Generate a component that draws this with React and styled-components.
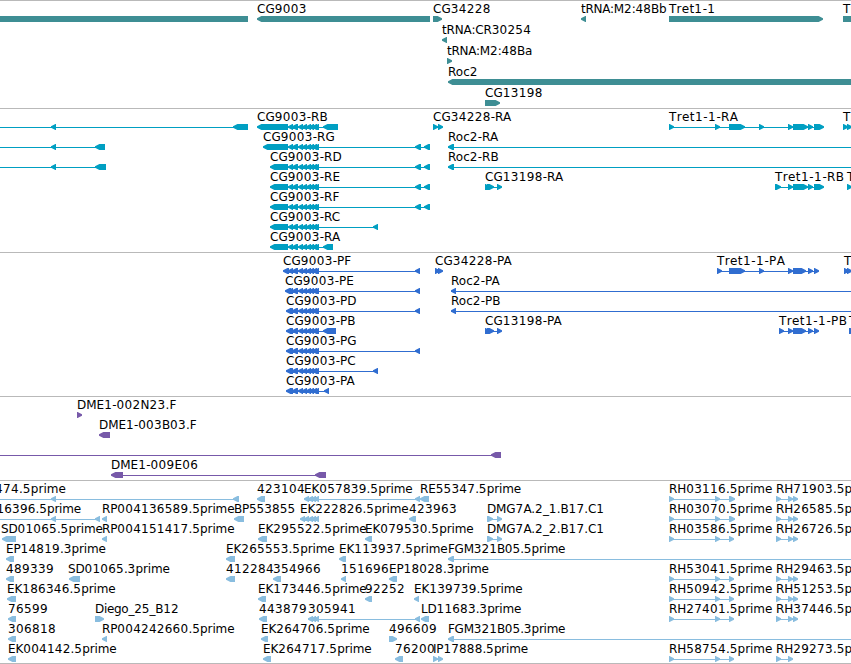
import React from "react";
import styled, { createGlobalStyle } from "styled-components";

const PageStyle = createGlobalStyle`
  body { margin: 0; background: #fff; overflow: hidden; }
`;

const Browser = styled.main`
  display: flex;
  flex-direction: column;
  width: 851px;
  height: 664px;
  overflow: hidden;
  background: #fff;
`;

const Track = styled.section`
  box-sizing: border-box;
  flex: none;
  height: ${(p) => p.$height}px;
  border-top: 1px solid #b9b9b9;
  color: ${(p) => p.$color};
  overflow: hidden;
`;

const Row = styled.div`
  position: relative;
  height: ${(p) => p.$height}px;
`;

const Label = styled.span`
  position: absolute;
  top: 1px;
  left: ${(p) => p.$x}px;
  font: 12px/14px "DejaVu Sans", sans-serif;
  font-kerning: ${(p) => (p.$spacing > 0 ? "none" : "auto")};
  letter-spacing: ${(p) => p.$spacing}px;
  color: #000;
  white-space: pre;
`;

const Digits = styled.span`
  letter-spacing: ${(p) => p.$spacing + 0.37}px;
`;

const Glyphs = styled.svg`
  display: block;
  width: 851px;
  height: 22px;
  fill: currentColor;
`;

const EndRule = styled.div`
  height: 1px;
  background: #b9b9b9;
`;

// A feature is [label, labelX, direction, segments, lineEnds?]
const L = "left";
const R = "right";
const N = "none";

// Tracking by label prefix, in pixels
const tracking = [
  ["Tret1-1-", 0.38],
  ["Tret", 0.25],
  ["EK", -0.11],
  ["EP", -0.13],
  ["RP", -0.11],
  ["RE", -0.12],
  ["RH", -0.07],
  ["BP", -0.3],
  ["DMG", -0.12],
  ["DME1-003", -0.08],
  ["tRNA:M2", -0.25],
  ["tRNA", -0.15],
  ["FGM", -0.28],
  ["Diego", -0.3],
  ["LD", -0.18],
  ["SD", -0.14],
  ["IP", -0.19],
  ["16396", -0.2],
];

const small = (...starts) => starts.map((s) => [s, s + 5]);
const introns = [[288, 293], [292, 298], ...small(298, 302, 306, 309, 312, 314)];
const cdsStart = (x) => [[x, x + 6], [288, 293], [292, 298], ...small(298, 302, 306, 309, 312, 314)];
const pair = [[415, 421], [424, 430]];
const tretTail = [[788, 793], [793, 808], [808, 813], [814, 824]];
const tretCds = [[788, 793], [793, 806], [808, 813], [814, 819]];
const rh = (a, end, b) => [
  [a, 669, R, [[669, 674], [715, 720], [729, end]]],
  [b, 776, R, [[776, 781], [788, 793], [793, 798]]],
];

const tracks = [
  {
    height: 108, pitch: 21, color: "#3e8e94",
    rows: [
      [
        ["", 0, N, [[-10, 248]]],
        ["CG9003", 257, L, [[257, 430]]],
        ["CG34228", 433, R, [[433, 442]]],
        ["tRNA:M2:48Bb", 581, L, [[581, 586]]],
        ["Tret1-1", 669, R, [[669, 823]]],
        ["Tret1-2", 843, R, [[843, 900]]],
      ],
      [["tRNA:CR30254", 442, L, [[442, 447]]]],
      [["tRNA:M2:48Ba", 447, R, [[447, 452]]]],
      [["Roc2", 448, L, [[448, 900]]]],
      [["CG13198", 485, R, [[485, 500]]]],
    ],
  },
  {
    height: 144, pitch: 20, color: "#009fc2",
    rows: [
      [
        ["", 0, L, [[51, 56], [233, 248]], [-5, 248]],
        ["CG9003-RB", 257, L, [[257, 288], ...introns, [323, 338]]],
        ["CG34228-RA", 433, R, [[433, 438], [438, 443]]],
        ["Tret1-1-RA", 669, R, [[669, 674], [715, 720], [729, 745], [759, 764], ...tretTail]],
        ["Tret1-2-RA", 843, R, [[843, 848], [847, 852]]],
      ],
      [
        ["", 0, L, [[51, 56], [95, 105]], [-5, 105]],
        ["CG9003-RG", 263, L, [[263, 288], ...introns, ...pair]],
        ["Roc2-RA", 448, L, [[448, 454]], [448, 860]],
      ],
      [
        ["", 0, L, [[51, 56], [95, 106]], [-5, 106]],
        ["CG9003-RD", 270, L, [[270, 288], ...introns, ...pair]],
        ["Roc2-RB", 448, L, [[448, 454]], [448, 860]],
      ],
      [
        ["CG9003-RE", 270, L, [[270, 288], ...introns, ...pair]],
        ["CG13198-RA", 485, R, [[485, 490], [487, 494], [497, 502]]],
        ["Tret1-1-RB", 775, R, [[775, 781], ...tretTail]],
        ["Tret1-2-RB", 847, R, [[847, 852]]],
      ],
      [["CG9003-RF", 270, L, [[270, 288], ...introns, ...pair]]],
      [["CG9003-RC", 270, L, [[270, 288], ...introns, [373, 378]]]],
      [["CG9003-RA", 270, L, [[270, 288], ...introns, [323, 333]]]],
    ],
  },
  {
    height: 144, pitch: 20, color: "#306dd0",
    rows: [
      [
        ["CG9003-PF", 283, L, [...cdsStart(283), [415, 420]]],
        ["CG34228-PA", 435, R, [[435, 440], [438, 443]]],
        ["Tret1-1-PA", 717, R, [[717, 722], [729, 745], [759, 764], ...tretCds]],
        ["Tret1-2-PA", 844, R, [[844, 849], [847, 852]]],
      ],
      [
        ["CG9003-PE", 285, L, [...cdsStart(285), [415, 420]]],
        ["Roc2-PA", 451, L, [[451, 456]], [451, 860]],
      ],
      [
        ["CG9003-PD", 286, L, [...cdsStart(286), [415, 420]]],
        ["Roc2-PB", 451, L, [[451, 456]], [451, 860]],
      ],
      [
        ["CG9003-PB", 286, L, [...cdsStart(286), [323, 336]]],
        ["CG13198-PA", 485, R, [[485, 490], [487, 494], [497, 502]]],
        ["Tret1-1-PB", 779, R, [[779, 784], ...tretCds]],
        ["Tret1-2-PB", 849, R, [[849, 855]]],
      ],
      [["CG9003-PG", 286, L, [...cdsStart(286), [415, 420]]]],
      [["CG9003-PC", 286, L, [...cdsStart(286), [373, 378]]]],
      [["CG9003-PA", 286, L, [...cdsStart(286), [324, 329]]]],
    ],
  },
  {
    height: 84, pitch: 20, color: "#7759a9",
    rows: [
      [["DME1-002N23.F", 77, R, [[77, 82]]]],
      [["DME1-003B03.F", 99, L, [[99, 110]]]],
      [["", 0, L, [[491, 501]], [-5, 501]]],
      [["DME1-009E06", 111, L, [[111, 123], [315, 326]]]],
    ],
  },
  {
    height: 183, pitch: 20, color: "#89bddf",
    rows: [
      [
        ["474.5prime", -5, L, [[51, 56], [233, 239]], [-5, 239]],
        ["423104", 257, L, [[257, 265]]],
        ["EK057839.5prime", 304, L, [...small(304, 308, 311, 314), [415, 420]]],
        ["RE55347.5prime", 420, L, [[420, 429]]],
        ...rh("RH03116.5prime", 735, "RH71903.5prime"),
      ],
      [
        ["16396.5prime", -3.5, L, [[51, 56], [95, 100]], [-5, 100]],
        ["RP004136589.5prime", 102, L, [[102, 107]]],
        ["BP553855", 234, L, [[234, 244]]],
        ["EK222826.5prime", 300, L, small(300, 304, 308, 311, 314)],
        ["423963", 409, L, [[409, 416]]],
        ["DMG7A.2_1.B17.C1", 487, R, [[487, 493], [497, 502]]],
        ...rh("RH03070.5prime", 735, "RH26585.5prime"),
      ],
      [
        ["SD01065.5prime", 1, L, [[2, 16]]],
        ["RP004151417.5prime", 102, L, [[102, 107]]],
        ["EK295522.5prime", 258, L, [[258, 267]]],
        ["EK079530.5prime", 365, L, [[365, 372]]],
        ["DMG7A.2_2.B17.C1", 487, R, [[487, 493], [497, 502]]],
        ...rh("RH03586.5prime", 734, "RH26726.5prime"),
      ],
      [
        ["EP14819.3prime", 6, L, [[6, 14]]],
        ["EK265553.5prime", 226, L, [[226, 235]]],
        ["EK113937.5prime", 339, L, [[339, 346]]],
        ["FGM321B05.5prime", 448, L, [[448, 454]], [448, 860]],
      ],
      [
        ["489339", 6, L, [[6, 14]]],
        ["SD01065.3prime", 68, L, [[69, 80]]],
        ["412284", 226, L, [[226, 235]]],
        ["354966", 273, L, [[273, 281]]],
        ["151696", 341, L, [[341, 346]]],
        ["EP18028.3prime", 389, L, [[389, 397]]],
        ...rh("RH53041.5prime", 734, "RH29463.5prime"),
      ],
      [
        ["EK186346.5prime", 7, L, [[7, 16]]],
        ["EK173446.5prime", 258, L, [[258, 266]]],
        ["92252", 365, L, [[365, 372]]],
        ["EK139739.5prime", 414, L, [[414, 419]]],
        ...rh("RH50942.5prime", 734, "RH51253.5prime"),
      ],
      [
        ["76599", 8, L, [[8, 16]]],
        ["Diego_25_B12", 95, R, [[95, 104]]],
        ["443879", 259, L, [[259, 267]]],
        ["305941", 308, L, [...small(308, 311, 314), [415, 420]]],
        ["LD11683.3prime", 421, L, [[421, 429]]],
        ...rh("RH27401.5prime", 734, "RH37446.5prime"),
      ],
      [
        ["306818", 8, L, [[8, 16]]],
        ["RP004242660.5prime", 102, L, [[102, 107]]],
        ["EK264706.5prime", 261, L, [[261, 268]]],
        ["496609", 389, R, [[389, 397]]],
        ["FGM321B05.3prime", 448, L, [[448, 454]], [448, 860]],
      ],
      [
        ["EK004142.5prime", 8, L, [[8, 16]]],
        ["EK264717.5prime", 263, L, [[263, 271]]],
        ["76200", 395, L, [[395, 403]]],
        ["IP17888.5prime", 433, R, [[433, 438], [438, 443]]],
        ["RH58754.5prime", 669, R, [[669, 674], [715, 720], [729, 734]]],
        ["RH29273.5prime", 776, R, [[776, 781], [788, 793]]],
      ],
    ],
  },
];

function segmentPath([a, b], dir) {
  if (dir === L) return `M${a} 17.2L${a + 4.4} 15H${b}V21H${a + 4.4}L${a} 18.8Z`;
  if (dir === R) return `M${b} 17.2L${b - 4.4} 15H${a}V21H${b - 4.4}L${b} 18.8Z`;
  return `M${a} 15H${b}V21H${a}Z`;
}

function Feature({ data: [, , dir, segs, ends] }) {
  const [from, to] = ends || [segs[0][0] + 1, segs[segs.length - 1][1] - 1];
  return (
    <g>
      {(ends || segs.length > 1) && <rect x={from} y="18" width={to - from} height="1" />}
      <path d={segs.map((s) => segmentPath(s, dir)).join("")} />
    </g>
  );
}

function FeatureLabel({ text, x }) {
  const rule = tracking.find(([prefix]) => text.startsWith(prefix));
  const spacing = rule ? rule[1] : 0;
  return (
    <Label $x={x} $spacing={spacing}>
      {text.split(/(\d+)/).map((part, i) =>
        i % 2 ? <Digits key={i} $spacing={spacing}>{part}</Digits> : part
      )}
    </Label>
  );
}

export default function App() {
  return (
    <Browser>
      <PageStyle />
      {tracks.map((t, i) => (
        <Track key={i} $height={t.height} $color={t.color}>
          {t.rows.map((row, j) => (
            <Row key={j} $height={t.pitch}>
              <Glyphs>
                {row.map((f, k) => <Feature key={k} data={f} />)}
              </Glyphs>
              {row.map((f, k) => f[0] && <FeatureLabel key={k} text={f[0]} x={f[1]} />)}
            </Row>
          ))}
        </Track>
      ))}
      <EndRule />
    </Browser>
  );
}
